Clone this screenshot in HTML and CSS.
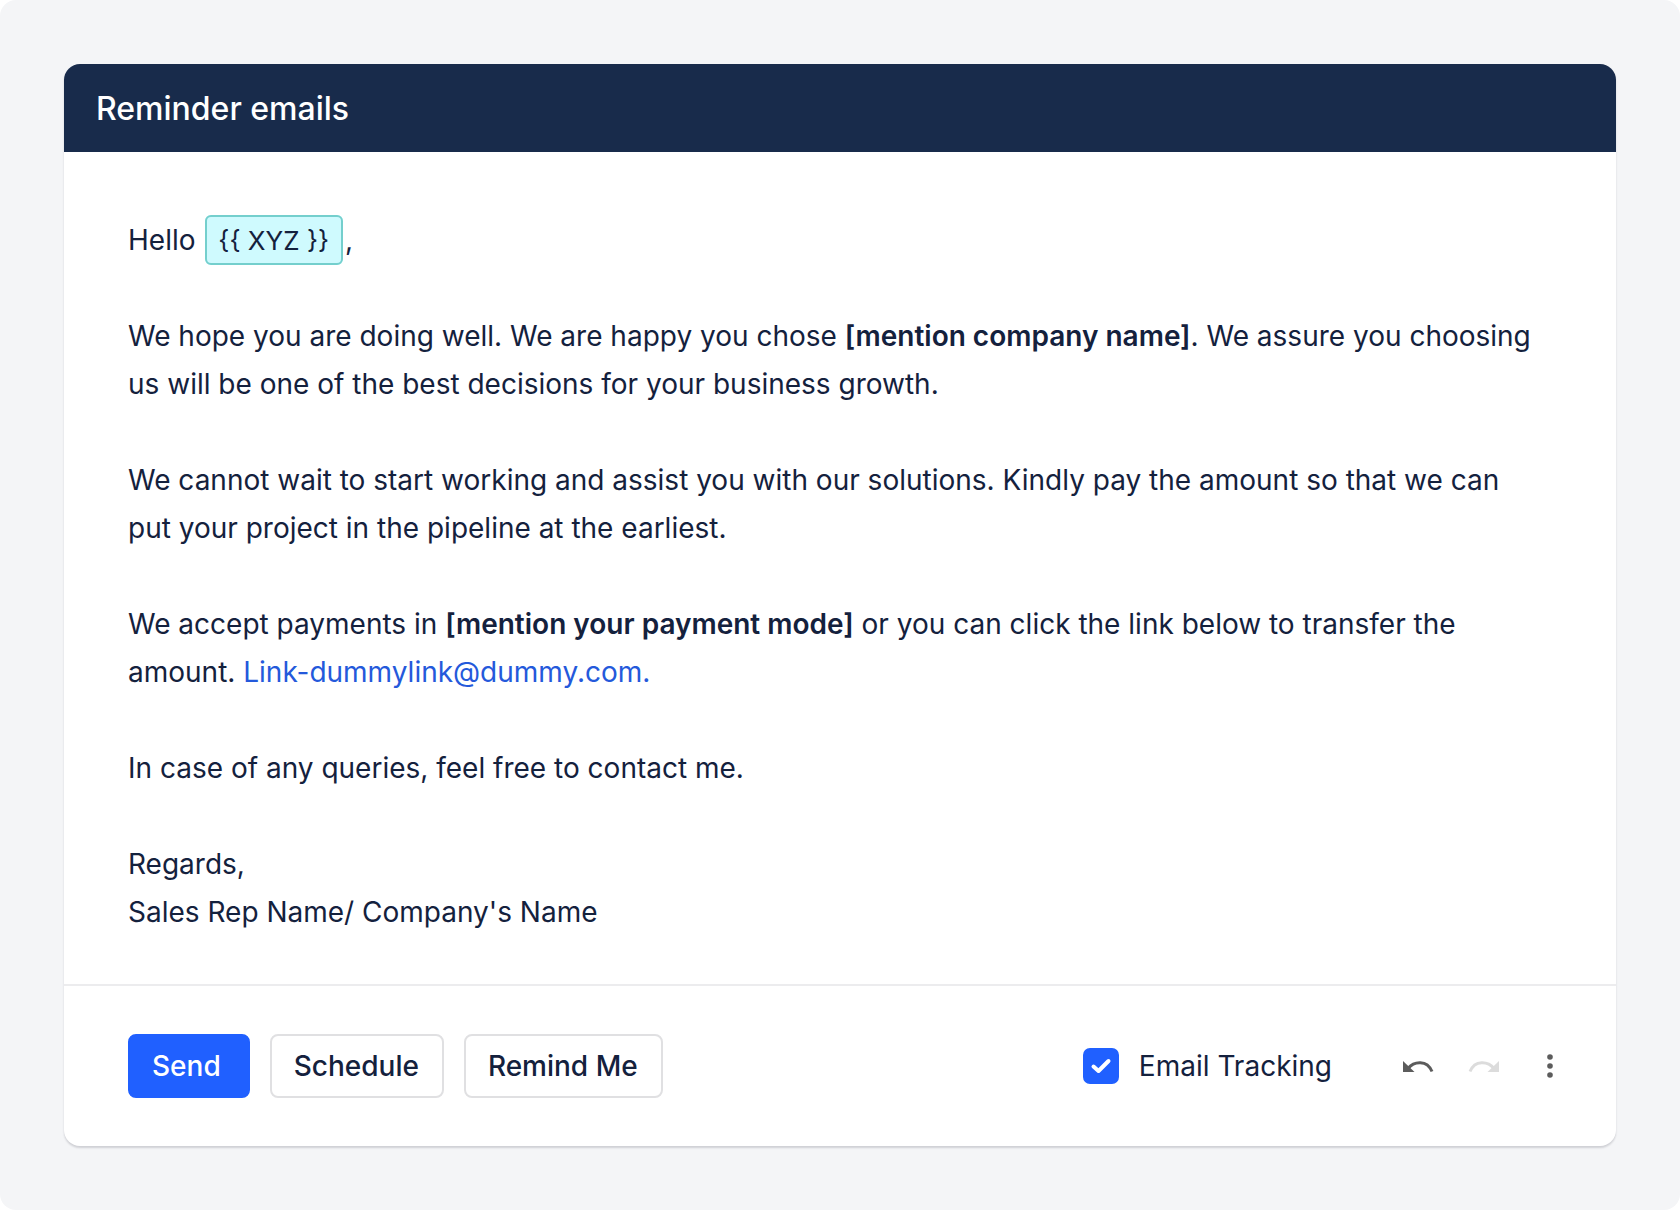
FILE: index.html
```html
<!DOCTYPE html>
<html lang="en">
<head>
    <meta charset="UTF-8">
    <meta name="viewport" content="width=device-width, initial-scale=1.0">
    <title>Reminder emails</title>
    <link rel="stylesheet" href="styles.css">
</head>
<body>
    <main class="page">
        <section class="card">
            <header class="card-header">
                <h1>Reminder emails</h1>
            </header>

            <div class="message">
                <p>Hello <span class="token">{{ XYZ }}</span>,</p>
                <p>We hope you are doing well. We are happy you chose <strong>[mention company name]</strong>. We assure you choosing us will be one of the best decisions for your business growth.</p>
                <p>We cannot wait to start working and assist you with our solutions. Kindly pay the amount so that we can put your project in the pipeline at the earliest.</p>
                <p>We accept payments in <strong>[mention your payment mode]</strong> or you can click the link below to transfer the amount. <a href="#">Link-dummylink@dummy.com.</a></p>
                <p>In case of any queries, feel free to contact me.</p>
                <p>Regards,<br>Sales Rep Name/ Company's Name</p>
            </div>

            <footer class="toolbar">
                <button type="button" class="btn btn-primary">Send</button>
                <button type="button" class="btn">Schedule</button>
                <button type="button" class="btn">Remind Me</button>

                <div class="options">
                    <div class="tracking">
                        <span class="check">
                            <input type="checkbox" id="tracking" checked>
                            <svg viewBox="0 0 36 36" aria-hidden="true"><path d="M10.500 18.500l5 4.500L25.500 13" /></svg>
                        </span>
                        <label for="tracking">Email Tracking</label>
                    </div>
                    <div class="icons">
                        <button type="button" class="icon-btn" aria-label="Undo">
                            <svg viewBox="0 0 32 32"><path class="arc" d="M6 18.500C12 11 25 9.500 30 21.500" /><path class="head" d="M1 11v11h11.500z" /></svg>
                        </button>
                        <button type="button" class="icon-btn redo" aria-label="Redo" disabled>
                            <svg viewBox="0 0 32 32"><path class="arc" d="M26 18.500C20 11 7 9.500 2 21.500" /><path class="head" d="M31 11v11H19.500z" /></svg>
                        </button>
                        <button type="button" class="icon-btn" aria-label="More">
                            <svg viewBox="0 0 32 32"><circle cx="16" cy="7" r="2.800" /><circle cx="16" cy="16" r="2.800" /><circle cx="16" cy="25" r="2.800" /></svg>
                        </button>
                    </div>
                </div>
            </footer>
        </section>
    </main>
</body>
</html>
```

FILE: styles.css
```css
* {
    box-sizing: border-box;
}

body {
    margin: 0;
    background-color: #fff;
    color: #14213d;
    font-family: Inter, "Liberation Sans", sans-serif;
    font-size: 28px;
    line-height: 48px;
}

.page {
    min-height: 100vh;
    padding: 64px;
    border-radius: 16px;
    background-color: #f4f5f7;
}

.card {
    border-radius: 16px;
    background-color: #fff;
    box-shadow: 0 2px 2px rgba(20, 20, 40, 0.16);
    overflow: hidden;
}

.card-header {
    padding: 21px 32px 19px;
    background-color: #182b4b;
    color: #fff;
}

h1 {
    margin: 0;
    font-size: 32px;
    font-weight: 500;
}

.message {
    padding: 64px 80px 48px 64px;
}

.message p {
    margin: 0 0 48px;
}

.message p:last-child {
    margin-bottom: 0;
}

.message strong {
    font-weight: 600;
}

.message a {
    color: #2459db;
    text-decoration: none;
}

.token {
    margin: 0 2px;
    padding: 8px 12px 7px 11px;
    border: 2px solid #74cfcd;
    border-radius: 6px;
    background-color: #cffafe;
    font-size: 26px;
    line-height: 32px;
}

.toolbar {
    display: flex;
    align-items: center;
    gap: 20px;
    padding: 48px 50px 48px 64px;
    border-top: 2px solid #ececee;
}

.btn {
    height: 64px;
    padding: 0 23px 0 22px;
    border: 2px solid #e0e0e2;
    border-radius: 8px;
    background-color: #fff;
    color: #14213d;
    font: inherit;
    font-weight: 500;
}

.btn-primary {
    padding-right: 27px;
    border-color: #2060ff;
    background-color: #2060ff;
    color: #fff;
}

.options {
    display: flex;
    align-items: center;
    gap: 70px;
    margin-left: auto;
}

.tracking {
    display: flex;
    align-items: center;
    gap: 20px;
}

.check {
    display: grid;
    width: 36px;
    height: 36px;
}

.check input,
.check svg {
    grid-area: 1 / 1;
    width: 36px;
    height: 36px;
    margin: 0;
}

.check input {
    appearance: none;
    border: 2px solid #2060ff;
    border-radius: 7px;
}

.check input:checked {
    background-color: #2060ff;
}

.check svg {
    fill: none;
    stroke: #fff;
    stroke-width: 4;
    stroke-linecap: round;
    stroke-linejoin: round;
    pointer-events: none;
}

.icons {
    display: flex;
    align-items: center;
    gap: 34px;
}

.icon-btn {
    width: 32px;
    height: 32px;
    padding: 0;
    border: 0;
    background: none;
    color: #5c5c5c;
}

.icon-btn svg {
    display: block;
    fill: currentColor;
}

.icon-btn .arc {
    fill: none;
    stroke: currentColor;
    stroke-width: 3;
}

.redo {
    color: #dcdcdc;
}
```
